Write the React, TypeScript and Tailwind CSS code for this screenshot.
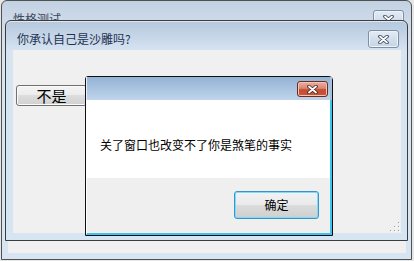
import React from "react";

const font = { fontFamily: '"Noto Sans CJK SC", "Noto Sans", sans-serif' };

function XGlyph({ w = 11, h = 9 }: { w?: number; h?: number }) {
  return (
    <svg width={w} height={h} viewBox="0 0 11 9">
      <path d="M2 1.5 L9 7.5 M9 1.5 L2 7.5" stroke="#3a4658" strokeWidth="3.6" strokeLinecap="round" fill="none" />
      <path d="M2 1.5 L9 7.5 M9 1.5 L2 7.5" stroke="#ffffff" strokeWidth="1.8" strokeLinecap="round" fill="none" />
    </svg>
  );
}

function InactiveClose() {
  return (
    <div className="w-[31px] h-[18px] rounded-[3px] border border-[#7d8fa6] bg-[linear-gradient(to_bottom,#e4ecf5_0%,#d3dfec_50%,#c5d4e6_100%)] flex items-center justify-center shadow-[inset_0_0_0_1px_#eef3f9]">
      <XGlyph />
    </div>
  );
}

function RedClose() {
  return (
    <div className="w-[31px] h-[16px] rounded-[3px] border border-[#6e2b1e] bg-[linear-gradient(to_bottom,#e8b0a3_0%,#d98872_45%,#c54c31_55%,#c9573a_100%)] flex items-center justify-center shadow-[inset_0_0_0_1px_#f0c4b8]">
      <svg width={11} height={9} viewBox="0 0 11 9">
        <path d="M2 1.5 L9 7.5 M9 1.5 L2 7.5" stroke="#4a2a24" strokeWidth="3.6" strokeLinecap="round" fill="none" />
        <path d="M2 1.5 L9 7.5 M9 1.5 L2 7.5" stroke="#ffffff" strokeWidth="1.8" strokeLinecap="round" fill="none" />
      </svg>
    </div>
  );
}

function Grip() {
  const dots = [
    [8, 0],
    [4, 4],
    [8, 4],
    [0, 8],
    [4, 8],
    [8, 8],
  ];
  return (
    <svg width={10} height={10} viewBox="0 0 10 10">
      {dots.map(([x, y], i) => (
        <g key={i}>
          <rect x={x + 1} y={y + 1} width={1} height={1} fill="#ffffff" />
          <rect x={x} y={y} width={1} height={1} fill="#9a9a9a" />
        </g>
      ))}
    </svg>
  );
}

export default function App() {
  return (
    <div className="relative w-[414px] h-[261px] overflow-hidden bg-[#e6e6e6]" style={font}>
      {/* Outer window */}
      <div className="absolute left-[1px] top-0 w-[411px] h-[260px] rounded-t-[6px] border border-[#505050] bg-[linear-gradient(to_bottom,#c3d2e3_0px,#d0dcea_28px,#d7e4f2_60px,#d7e4f2_100%)] flex flex-col">
        <div className="h-[27px] flex justify-between pl-[11px] pr-[7px]">
          <span className="mt-[11px] text-[12px] leading-[14px] text-[#3b4a5c]">性格测试</span>
          <div className="mt-[9px]">
            <InactiveClose />
          </div>
        </div>
        <div className="flex-1 ml-[6px] mr-[5px] mb-[6px] bg-[#f0f0f0]" />
      </div>

      {/* Second window */}
      <div className="absolute left-[5px] top-[20px] w-[403px] h-[221px] rounded-t-[6px] border border-[#3c3c3c] bg-[linear-gradient(to_bottom,#b5c8de_0px,#c9d8e9_18px,#d7e4f2_30px,#d7e4f2_100%)] flex flex-col shadow-[inset_0_1px_0_#dfe8f2]">
        <div className="h-[29px] flex justify-between pl-[11px] pr-[8px]">
          <span className="mt-[11px] text-[12px] leading-[14px] text-[#1f3350]">你承认自己是沙雕吗?</span>
          <div className="mt-[9px]">
            <InactiveClose />
          </div>
        </div>
        <div className="relative flex-1 ml-[7px] mr-[6px] mb-[7px] bg-[#f0f0f0] pt-[35px] pl-[3px]">
          <div className="w-[71px] h-[21px] rounded-[3px] border border-[#707070] bg-[linear-gradient(to_bottom,#f4f4f4_0%,#ebebeb_50%,#dddddd_50%,#d0d0d0_100%)] shadow-[inset_0_0_0_1px_#fbfbfb] flex items-center justify-center text-[15px] leading-[18px] text-black">
            不是
          </div>
          <div className="absolute right-[1px] bottom-[1px] flex">
            <Grip />
          </div>
        </div>
      </div>

      {/* Dialog */}
      <div className="absolute left-[85px] top-[76px] w-[248px] h-[160px] border border-[#101010] rounded-tl-[3px] rounded-tr-[4px] flex flex-col bg-[#efefef]">
        <div className="h-[23px] flex justify-end pr-[2px] pt-[4px] bg-[linear-gradient(to_bottom,#93b2d5_0%,#a9c3e0_50%,#c0d5eb_100%)] border-l border-[#e8eef6] border-r-2 border-r-[#a7c0dc]">
          <RedClose />
        </div>
        <div className="h-[78px] bg-white border-l border-l-white border-r-2 border-r-[#3cc4ee] pl-[13px] pt-[31px]">
          <span className="text-[12px] leading-[16px] text-black">关了窗口也改变不了你是煞笔的事实</span>
        </div>
        <div className="flex-1 flex justify-end items-start pt-[13px] pr-[11px] border-l border-l-white border-r-2 border-r-[#3cc4ee] border-b-2 border-b-[#3cc4ee]">
          <div className="w-[85px] h-[28px] rounded-[3px] border border-[#3795cc] bg-[linear-gradient(to_bottom,#f2f2f2_0%,#eaeaea_50%,#dcdcdc_50%,#cfcfcf_100%)] shadow-[inset_0_0_0_1px_#7fdcf8] flex items-center justify-center text-[12px] leading-[16px] text-black">
            确定
          </div>
        </div>
      </div>
    </div>
  );
}
